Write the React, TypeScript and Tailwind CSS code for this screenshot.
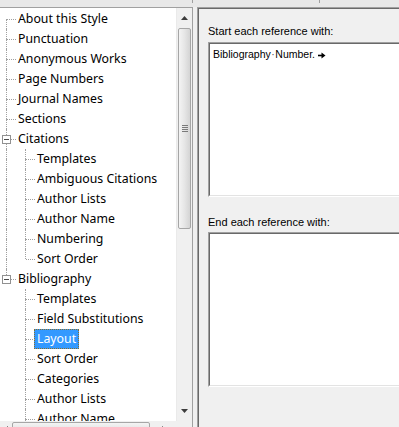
import React from 'react';

type Kind = 'first' | 'tee' | 'last' | 'none';

interface Row {
  label: string;
  level: 0 | 1;
  kind: Kind; // connector of the row itself
  parent?: Kind; // level-1 rows: connector of their parent column
  expander?: boolean;
  selected?: boolean;
}

const ROWS: Row[] = [
  { label: 'About this Style', level: 0, kind: 'first' },
  { label: 'Punctuation', level: 0, kind: 'tee' },
  { label: 'Anonymous Works', level: 0, kind: 'tee' },
  { label: 'Page Numbers', level: 0, kind: 'tee' },
  { label: 'Journal Names', level: 0, kind: 'tee' },
  { label: 'Sections', level: 0, kind: 'tee' },
  { label: 'Citations', level: 0, kind: 'tee', expander: true },
  { label: 'Templates', level: 1, kind: 'tee', parent: 'tee' },
  { label: 'Ambiguous Citations', level: 1, kind: 'tee', parent: 'tee' },
  { label: 'Author Lists', level: 1, kind: 'tee', parent: 'tee' },
  { label: 'Author Name', level: 1, kind: 'tee', parent: 'tee' },
  { label: 'Numbering', level: 1, kind: 'tee', parent: 'tee' },
  { label: 'Sort Order', level: 1, kind: 'last', parent: 'tee' },
  { label: 'Bibliography', level: 0, kind: 'last', expander: true },
  { label: 'Templates', level: 1, kind: 'tee', parent: 'none' },
  { label: 'Field Substitutions', level: 1, kind: 'tee', parent: 'none' },
  { label: 'Layout', level: 1, kind: 'tee', parent: 'none', selected: true },
  { label: 'Sort Order', level: 1, kind: 'tee', parent: 'none' },
  { label: 'Categories', level: 1, kind: 'tee', parent: 'none' },
  { label: 'Author Lists', level: 1, kind: 'tee', parent: 'none' },
  { label: 'Author Name', level: 1, kind: 'tee', parent: 'none' },
];

// one indentation column of the tree: dotted guide lines (+ optional expander box)
function Guide({ kind, stub, x, width, expander }: { kind: Kind; stub: boolean; x: number; width: number; expander?: boolean }) {
  const vTop = kind === 'tee' || kind === 'last';
  const vBottom = kind === 'tee' || kind === 'first';
  return (
    <span className="relative h-full flex-none" style={{ width }}>
      {vTop && <span className="absolute top-0 h-[10px] border-l border-dotted border-[#a0a0a0]" style={{ left: x }} />}
      {vBottom && <span className="absolute top-[10px] bottom-0 border-l border-dotted border-[#a0a0a0]" style={{ left: x }} />}
      {stub && <span className="absolute top-[10px] border-t border-dotted border-[#a0a0a0]" style={{ left: x + 1, width: width - x - 1 }} />}
      {expander && (
        <span className="absolute top-[6px] w-[9px] h-[9px] bg-white border border-[#919191] flex items-center justify-center" style={{ left: x - 4 }}>
          <span className="w-[5px] h-px bg-[#4a4a4a]" />
        </span>
      )}
    </span>
  );
}

function TreeRow({ row }: { row: Row }) {
  return (
    <div className="flex items-center h-[20px] whitespace-nowrap">
      {row.level === 0 ? (
        <Guide kind={row.kind} stub x={6} width={16} expander={row.expander} />
      ) : (
        <>
          <Guide kind={row.parent ?? 'none'} stub={false} x={6} width={16} />
          <Guide kind={row.kind} stub x={9} width={19} />
        </>
      )}
      <span
        className={`px-[2px] leading-[18px] border border-dotted ${
          row.selected ? 'bg-[#3399ff] text-white border-[#8a6d2a]' : 'border-transparent text-black'
        } -ml-px`}
      >
        {row.label}
      </span>
    </div>
  );
}

function Tri({ dir }: { dir: 'up' | 'down' | 'left' | 'right' }) {
  const pts = {
    up: '0,4 7,4 3.5,0',
    down: '0,0 7,0 3.5,4',
    left: '4,0 4,7 0,3.5',
    right: '0,0 0,7 4,3.5',
  }[dir];
  const vertical = dir === 'up' || dir === 'down';
  return (
    <svg width={vertical ? 7 : 4} height={vertical ? 4 : 7} viewBox={vertical ? '0 0 7 4' : '0 0 4 7'}>
      <polygon points={pts} fill="#3c3c3c" />
    </svg>
  );
}

function VScroll() {
  return (
    <div className="w-[16px] flex-none flex flex-col bg-[#f0f0f0] border-l border-[#eaeaea]">
      <div className="h-[20px] flex items-center justify-center">
        <Tri dir="up" />
      </div>
      <div className="h-[201px] mx-[1px] rounded-[2px] border border-[#a6a6a6] bg-gradient-to-r from-[#f4f4f4] via-[#e6e6e6] to-[#d4d4d4] flex flex-col items-center justify-center gap-[1px]">
        <span className="w-[6px] h-px bg-[#7a7a7a]" />
        <span className="w-[6px] h-px bg-[#7a7a7a]" />
        <span className="w-[6px] h-px bg-[#7a7a7a]" />
        <span className="w-[6px] h-px bg-[#7a7a7a]" />
      </div>
      <div className="flex-1" />
      <div className="h-[20px] flex items-center justify-center">
        <Tri dir="down" />
      </div>
    </div>
  );
}

function HScroll() {
  return (
    <div className="h-[17px] flex bg-[#f0f0f0]">
      <div className="w-[177px] flex items-stretch">
        <div className="w-[12px] flex items-center justify-center">
          <Tri dir="left" />
        </div>
        <div className="w-[138px] my-[1px] rounded-[2px] border border-[#a6a6a6] bg-gradient-to-b from-[#f4f4f4] to-[#d4d4d4] flex items-center justify-center gap-[1px]">
          <span className="h-[6px] w-px bg-[#7a7a7a]" />
          <span className="h-[6px] w-px bg-[#7a7a7a]" />
          <span className="h-[6px] w-px bg-[#7a7a7a]" />
          <span className="h-[6px] w-px bg-[#7a7a7a]" />
        </div>
        <div className="flex-1 flex items-center justify-center">
          <Tri dir="right" />
        </div>
      </div>
      <div className="flex-1 bg-[#f0f0f0]" />
    </div>
  );
}

function TextBox({ children }: { children?: React.ReactNode }) {
  return (
    <div className="h-[155px] w-[230px] border-t border-l border-b border-t-[#a0a0a0] border-l-[#a0a0a0] border-b-white">
      <div className="h-full bg-white border-t border-l border-b border-t-[#696969] border-l-[#696969] border-b-[#e3e3e3] pl-[3px] pt-[4px]">
        {children}
      </div>
    </div>
  );
}

export default function App() {
  return (
    <div className="w-[399px] h-[427px] overflow-hidden bg-[#f0f0f0] font-['Liberation_Sans',Arial,sans-serif] flex flex-col">
      {/* strip of the control above */}
      <div className="h-[7px] flex flex-none bg-[#e8e8e8]">
        <div className="w-[193px] h-[3px] border-r border-[#a0a0a0]" />
        <div className="w-[127px] h-[3px] border-r border-[#a0a0a0]" />
      </div>
      <div className="flex flex-1 min-h-0">
        {/* tree pane */}
        <div className="w-[193px] h-[431px] flex-none flex flex-col border-t border-r border-[#a0a0a0] bg-white">
          <div className="flex flex-1 min-h-0">
            <div className="flex-1 overflow-hidden pt-[1px] font-['Noto_Sans',sans-serif] text-[12.3px]">
              {ROWS.map((r, i) => (
                <TreeRow key={i} row={r} />
              ))}
            </div>
            <VScroll />
          </div>
          <HScroll />
        </div>
        <div className="w-[4px] flex-none" />
        {/* settings pane */}
        <div className="flex-1 border-t border-l border-[#a0a0a0]">
          <div className="h-full border-t border-l border-[#696969] pl-[9px] text-[11px] text-black">
            <div className="mt-[15px] mb-[4px] leading-[14px]">Start each reference with:</div>
            <TextBox>
              <div className="flex items-center text-[10.5px] leading-[13px]">
                <span>Bibliography</span>
                <span className="text-[#555] px-[0.5px]">·</span>
                <span>Number.</span>
                <svg width="8" height="7" viewBox="0 0 8 7" className="ml-[3px] mt-[2px]">
                  <path d="M0 3.5 H4.5" stroke="#000" strokeWidth="1.6" />
                  <polygon points="3.5,0.5 7.5,3.5 3.5,6.5" fill="#000" />
                </svg>
              </div>
            </TextBox>
            <div className="mt-[18px] mb-[3px] leading-[14px]">End each reference with:</div>
            <TextBox />
          </div>
        </div>
      </div>
    </div>
  );
}
